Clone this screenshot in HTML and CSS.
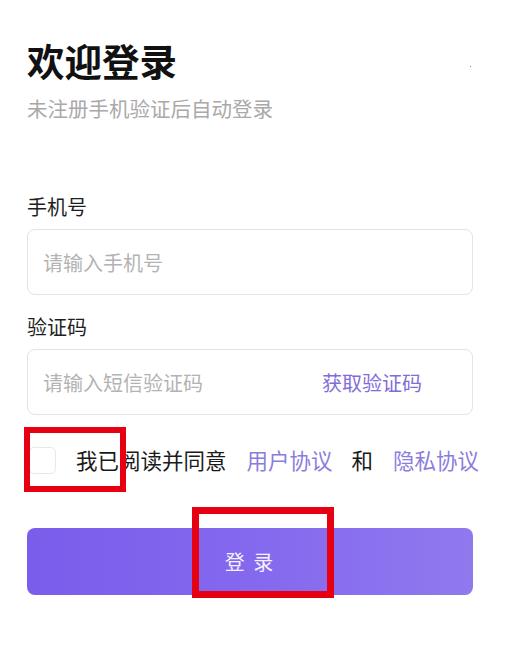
FILE: index.html
```html
<!DOCTYPE html>
<html lang="zh-CN">
<head>
<meta charset="utf-8">
<link rel="stylesheet" href="styles.css">
</head>
<body>
<div class="page">
  <h1 class="title">欢迎登录</h1>
  <p class="subtitle">未注册手机验证后自动登录</p>

  <div class="field field-first">
    <div class="label">手机号</div>
    <div class="input"><span class="placeholder">请输入手机号</span></div>
  </div>

  <div class="field">
    <div class="label">验证码</div>
    <div class="input"><span class="placeholder">请输入短信验证码</span><span class="code-btn">获取验证码</span></div>
  </div>

  <div class="agree">
    <span class="checkbox"></span>
    <span class="agree-text">我已阅读并同意</span>
    <span class="link">用户协议</span>
    <span class="and">和</span>
    <span class="link">隐私协议</span>
  </div>

  <div class="login-btn">登 录</div>

  <span class="dot"></span>
  <div class="mark mark-check"></div>
  <div class="mark mark-btn"></div>
</div>
</body>
</html>
```

FILE: styles.css
```css
* { box-sizing: border-box; }
html, body { margin: 0; padding: 0; background: #fff; }
body {
  font-family: "Noto Sans CJK SC", "Noto Sans", sans-serif;
  width: 511px;
  height: 666px;
  overflow: hidden;
}
.page {
  position: relative;
  padding: 36px 38px 0 27px;
  height: 666px;
}
.title {
  margin: 0;
  font-size: 37.5px;
  line-height: 48px;
  font-weight: 700;
  color: #111;
}
.subtitle {
  margin: 10px 0 0;
  font-size: 20.5px;
  line-height: 28px;
  color: #a9a9a9;
  white-space: nowrap;
}
.field { margin-top: 18px; }
.field-first { margin-top: 71px; }
.label {
  font-size: 20px;
  line-height: 28px;
  color: #1e1e1e;
}
.input {
  margin-top: 8px;
  height: 66px;
  border: 1px solid #e3e3e3;
  border-radius: 8px;
  display: flex;
  align-items: center;
  justify-content: space-between;
  padding: 0 50px 0 15px;
  font-size: 20px;
  white-space: nowrap;
}
.placeholder { color: #b3b3b3; }
.code-btn { color: #7f6ed9; }
.agree {
  margin-top: 31px;
  height: 28px;
  display: flex;
  align-items: center;
  font-size: 21.5px;
  line-height: 28px;
  color: #1a1a1a;
  white-space: nowrap;
}
.agree > span { flex: none; }
.checkbox {
  width: 27px;
  height: 27px;
  margin-left: 2px;
  border: 1px solid #e8e8e8;
  border-radius: 5px;
}
.agree-text { margin-left: 20px; }
.link { color: #8a7ddc; margin-left: 20px; }
.and { margin-left: 19px; }
.login-btn {
  margin-top: 54px;
  height: 67px;
  border-radius: 8px;
  background: linear-gradient(90deg, #7a5deb 0%, #8468ee 50%, #9079ef 100%);
  color: #f4f0ff;
  font-size: 20px;
  display: flex;
  align-items: center;
  justify-content: center;
  letter-spacing: 2px;
}
.dot {
  position: absolute;
  left: 470px;
  top: 66px;
  width: 1px;
  height: 1px;
  background: #888;
}
.mark {
  position: absolute;
  border: 6px solid #e60012;
}
.mark-check {
  left: 24px;
  top: 427px;
  width: 102px;
  height: 65px;
}
.mark-btn {
  left: 192px;
  top: 507px;
  width: 142px;
  height: 91px;
  border-width: 7px;
}
```
